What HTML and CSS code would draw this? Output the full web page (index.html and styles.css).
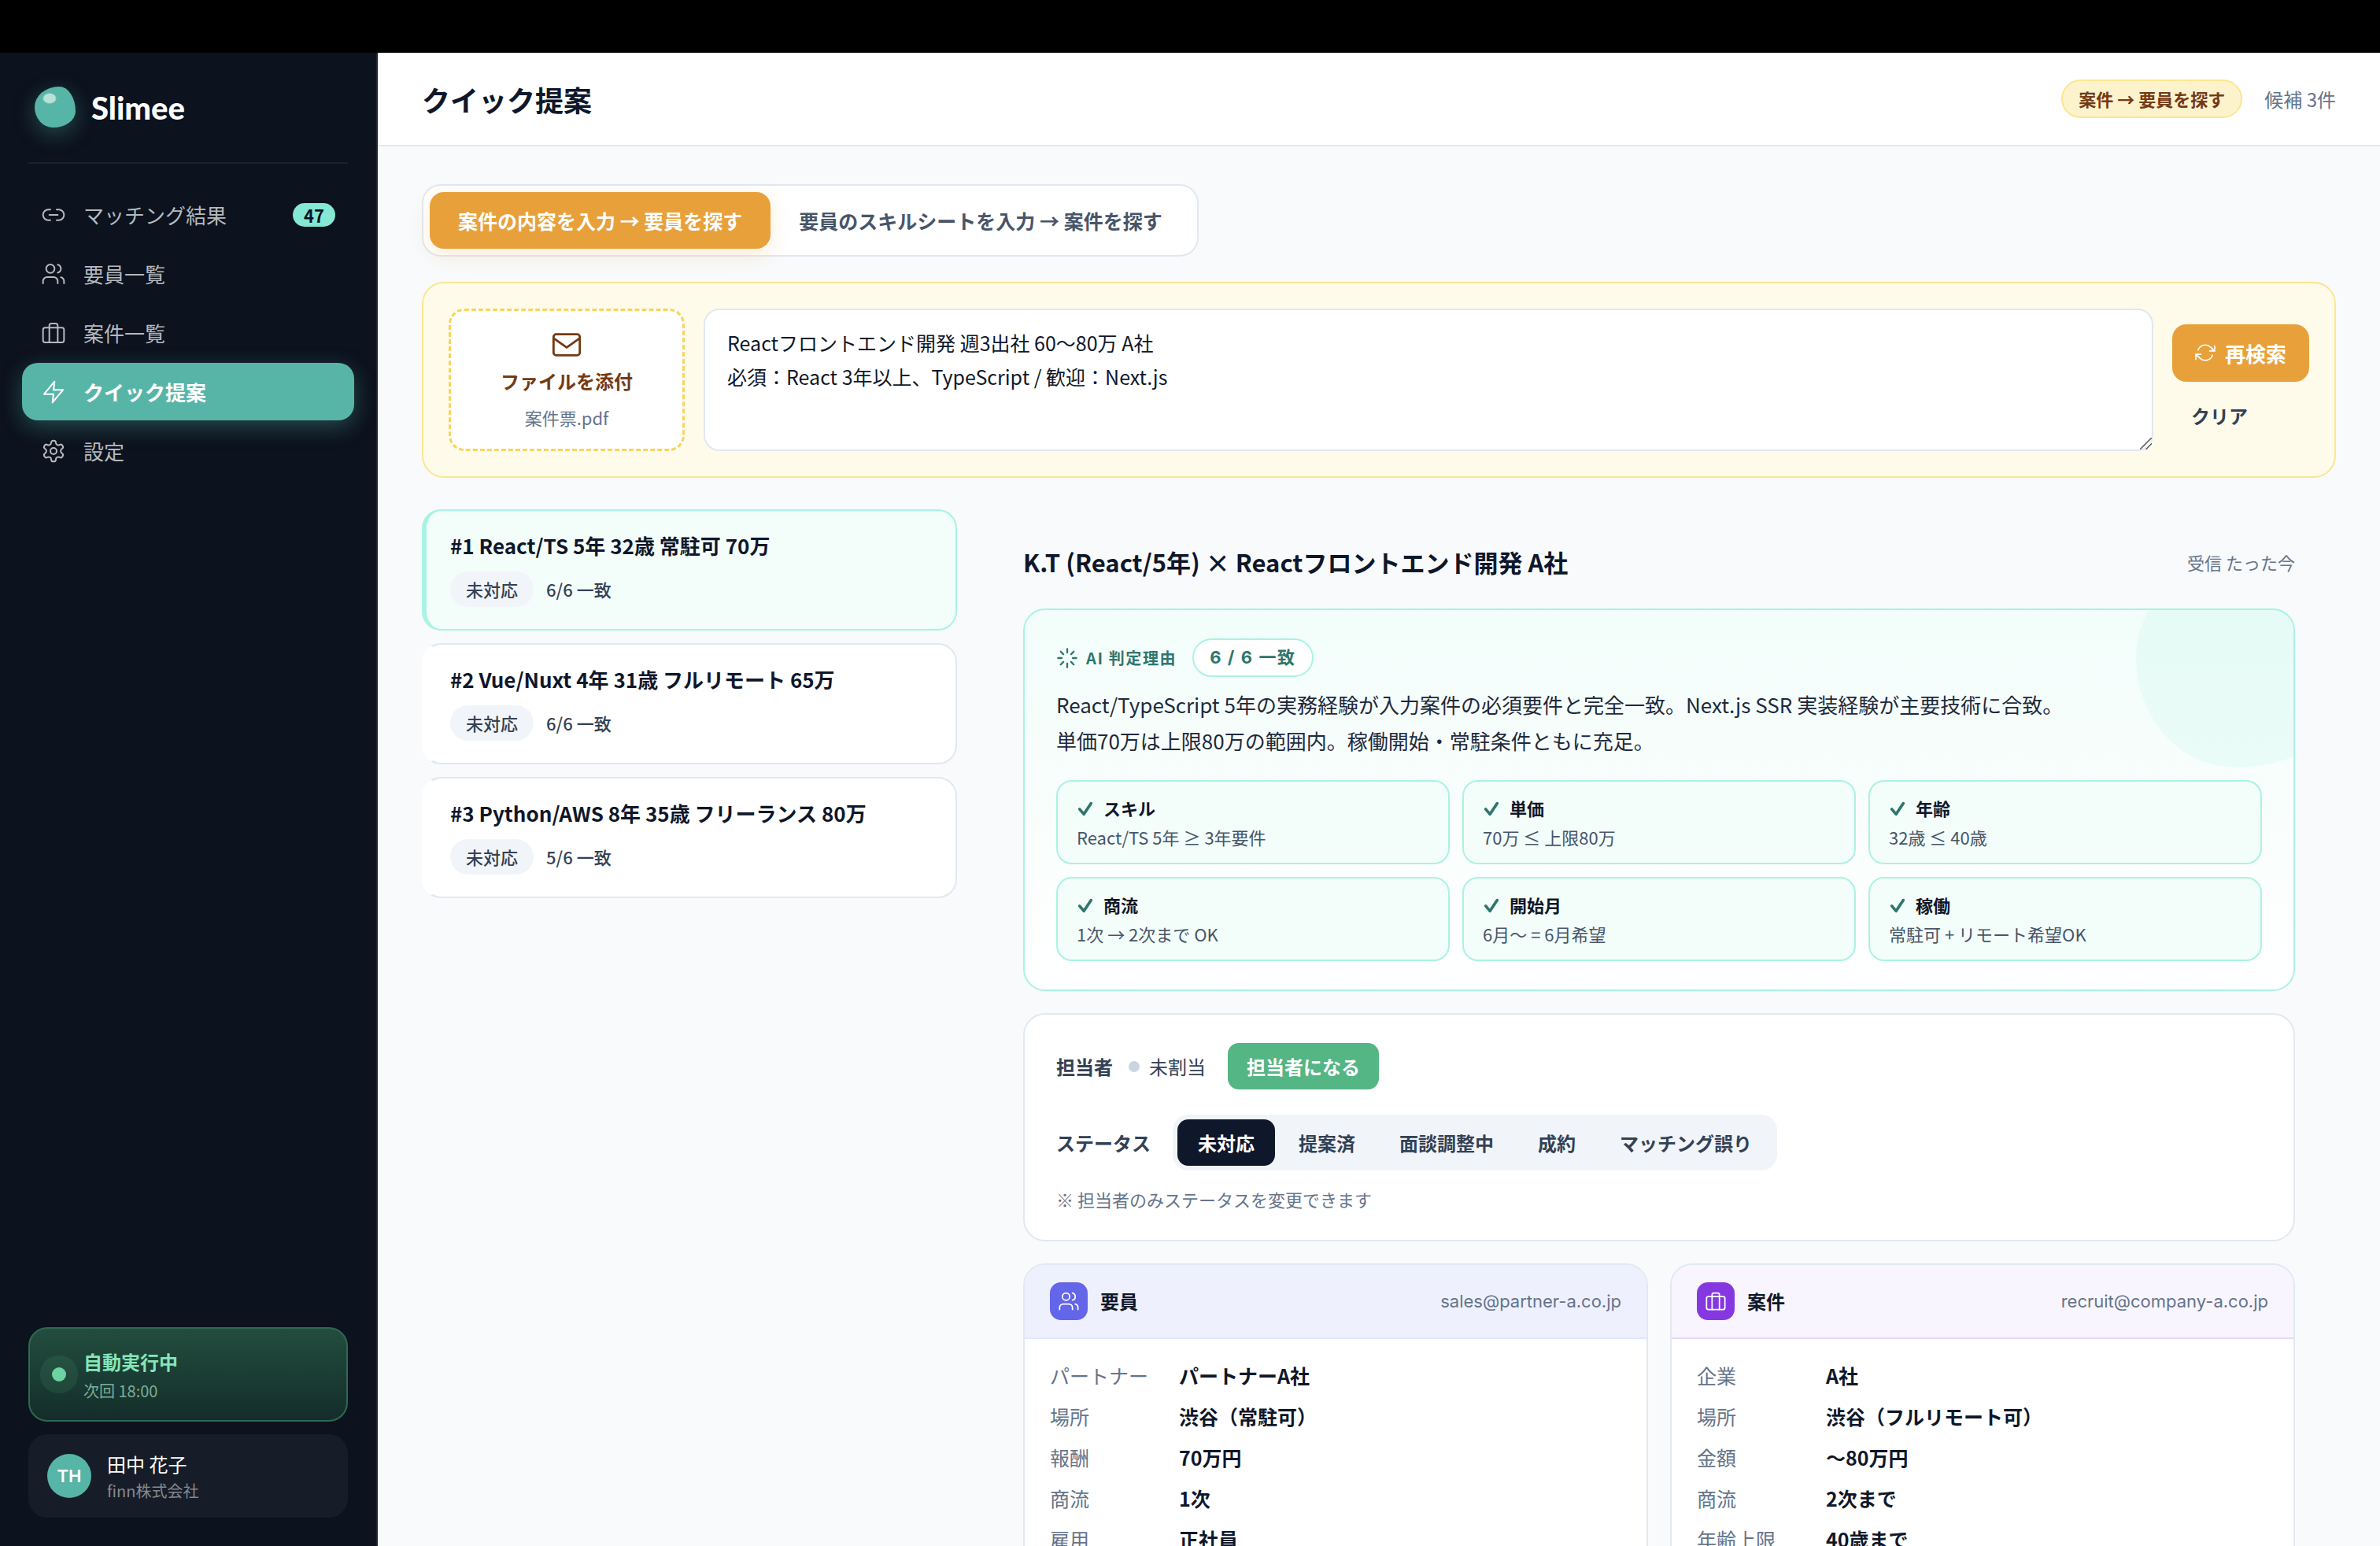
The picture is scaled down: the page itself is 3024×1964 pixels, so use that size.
FILE: index.html
```html
<!DOCTYPE html>
<html lang="ja">
<head>
<meta charset="utf-8">
<meta name="viewport" content="width=device-width, initial-scale=1">
<title>Slimee - クイック提案</title>
<link rel="stylesheet" href="styles.css">
</head>
<body>
<svg class="sprite" aria-hidden="true">
  <symbol id="i-link" viewBox="0 0 24 24"><path d="M9 17H7A5 5 0 0 1 7 7h2M15 7h2a5 5 0 1 1 0 10h-2M8 12h8"/></symbol>
  <symbol id="i-users" viewBox="0 0 24 24"><path d="M16 21v-2a4 4 0 0 0-4-4H6a4 4 0 0 0-4 4v2"/><circle cx="9" cy="7" r="4"/><path d="M22 21v-2a4 4 0 0 0-3-3.87M16 3.13a4 4 0 0 1 0 7.75"/></symbol>
  <symbol id="i-case" viewBox="0 0 24 24"><rect x="2" y="7" width="20" height="14" rx="2"/><path d="M16 21V5a2 2 0 0 0-2-2h-4a2 2 0 0 0-2 2v16"/></symbol>
  <symbol id="i-bolt" viewBox="0 0 24 24"><path d="M13 2 3 14h9l-1 8 10-12h-9l1-8z"/></symbol>
  <symbol id="i-gear" viewBox="0 0 24 24"><path d="M12.22 2h-.44a2 2 0 0 0-2 2v.18a2 2 0 0 1-1 1.73l-.43.25a2 2 0 0 1-2 0l-.15-.08a2 2 0 0 0-2.73.73l-.22.38a2 2 0 0 0 .73 2.73l.15.1a2 2 0 0 1 1 1.72v.51a2 2 0 0 1-1 1.74l-.15.09a2 2 0 0 0-.73 2.73l.22.38a2 2 0 0 0 2.73.73l.15-.08a2 2 0 0 1 2 0l.43.25a2 2 0 0 1 1 1.73V20a2 2 0 0 0 2 2h.44a2 2 0 0 0 2-2v-.18a2 2 0 0 1 1-1.73l.43-.25a2 2 0 0 1 2 0l.15.08a2 2 0 0 0 2.73-.73l.22-.39a2 2 0 0 0-.73-2.73l-.15-.08a2 2 0 0 1-1-1.74v-.5a2 2 0 0 1 1-1.74l.15-.09a2 2 0 0 0 .73-2.73l-.22-.38a2 2 0 0 0-2.73-.73l-.15.08a2 2 0 0 1-2 0l-.43-.25a2 2 0 0 1-1-1.73V4a2 2 0 0 0-2-2z"/><circle cx="12" cy="12" r="3"/></symbol>
  <symbol id="i-mail" viewBox="0 0 24 24"><rect x="2" y="4" width="20" height="16" rx="2"/><path d="m22 7-10 7L2 7"/></symbol>
  <symbol id="i-refresh" viewBox="0 0 24 24"><path d="M23 4v6h-6M1 20v-6h6"/><path d="M3.51 9a9 9 0 0 1 14.85-3.36L23 10M1 14l4.64 4.36A9 9 0 0 0 20.49 15"/></symbol>
  <symbol id="i-spark" viewBox="0 0 24 24"><path d="M12 2v4M12 18v4M4.93 4.93l2.83 2.83M16.24 16.24l2.83 2.83M2 12h4M18 12h4M4.93 19.07l2.83-2.83M16.24 7.76l2.83-2.83"/></symbol>
  <symbol id="i-check" viewBox="0 0 24 24"><path d="m4 13 6 7L20 5"/></symbol>
</svg>

<div class="topbar"></div>
<div class="app">
  <aside class="sidebar">
    <div class="brand"><span class="blob"></span><span class="brand-name">Slimee</span></div>
    <nav class="nav">
      <a class="nav-item" href="#"><svg class="icon"><use href="#i-link"/></svg>マッチング結果<span class="count">47</span></a>
      <a class="nav-item" href="#"><svg class="icon"><use href="#i-users"/></svg>要員一覧</a>
      <a class="nav-item" href="#"><svg class="icon"><use href="#i-case"/></svg>案件一覧</a>
      <a class="nav-item active" href="#" aria-current="page"><svg class="icon"><use href="#i-bolt"/></svg>クイック提案</a>
      <a class="nav-item" href="#"><svg class="icon"><use href="#i-gear"/></svg>設定</a>
    </nav>
    <div class="sidebar-foot">
      <div class="run-card">
        <span class="pulse"></span>
        <div class="foot-text"><p class="run-title">自動実行中</p><p class="run-next">次回 18:00</p></div>
      </div>
      <div class="user-card">
        <span class="avatar">TH</span>
        <div class="foot-text"><p class="user-name">田中 花子</p><p class="user-org">finn株式会社</p></div>
      </div>
    </div>
  </aside>

  <div class="page">
    <header class="page-head">
      <h1>クイック提案</h1>
      <span class="mode-pill">案件 → 要員を探す</span>
      <span class="hits">候補 3件</span>
    </header>
    <main class="content">
      <div class="tabs">
        <button class="tab selected" type="button">案件の内容を入力 → 要員を探す</button>
        <button class="tab" type="button">要員のスキルシートを入力 → 案件を探す</button>
      </div>

      <form class="search">
        <button class="attach" type="button">
          <svg class="icon icon-mail"><use href="#i-mail"/></svg>
          <span class="attach-title">ファイルを添付</span>
          <span class="attach-file">案件票.pdf</span>
        </button>
        <textarea class="query" aria-label="案件の内容">Reactフロントエンド開発 週3出社 60〜80万 A社
必須：React 3年以上、TypeScript / 歓迎：Next.js</textarea>
        <div class="search-actions">
          <button class="again" type="button"><svg class="icon icon-refresh"><use href="#i-refresh"/></svg>再検索</button>
          <button class="clear" type="button">クリア</button>
        </div>
      </form>

      <div class="split">
        <section class="results" aria-label="候補">
          <article class="result current"><h3>#1 React/TS 5年 32歳 常駐可 70万</h3><p class="result-meta"><span class="state">未対応</span><span>6/6 一致</span></p></article>
          <article class="result"><h3>#2 Vue/Nuxt 4年 31歳 フルリモート 65万</h3><p class="result-meta"><span class="state">未対応</span><span>6/6 一致</span></p></article>
          <article class="result"><h3>#3 Python/AWS 8年 35歳 フリーランス 80万</h3><p class="result-meta"><span class="state">未対応</span><span>5/6 一致</span></p></article>
        </section>

        <section class="detail">
          <div class="detail-head">
            <h2>K.T (React/5年) × Reactフロントエンド開発 A社</h2>
            <span class="received">受信 たった今</span>
          </div>

          <div class="card reason">
            <div class="reason-head">
              <svg class="icon icon-spark"><use href="#i-spark"/></svg>
              <span>AI 判定理由</span>
              <span class="score">6 / 6 一致</span>
            </div>
            <p class="reason-text">React/TypeScript 5年の実務経験が入力案件の必須要件と完全一致。Next.js SSR 実装経験が主要技術に合致。<br>単価70万は上限80万の範囲内。稼働開始・常駐条件ともに充足。</p>
            <ul class="checks">
              <li><strong><svg class="icon icon-check"><use href="#i-check"/></svg>スキル</strong><span>React/TS 5年 ≥ 3年要件</span></li>
              <li><strong><svg class="icon icon-check"><use href="#i-check"/></svg>単価</strong><span>70万 ≤ 上限80万</span></li>
              <li><strong><svg class="icon icon-check"><use href="#i-check"/></svg>年齢</strong><span>32歳 ≤ 40歳</span></li>
              <li><strong><svg class="icon icon-check"><use href="#i-check"/></svg>商流</strong><span>1次 → 2次まで OK</span></li>
              <li><strong><svg class="icon icon-check"><use href="#i-check"/></svg>開始月</strong><span>6月〜 = 6月希望</span></li>
              <li><strong><svg class="icon icon-check"><use href="#i-check"/></svg>稼働</strong><span>常駐可 + リモート希望OK</span></li>
            </ul>
          </div>

          <div class="card manage">
            <div class="manage-row">
              <span class="field">担当者</span>
              <span class="owner">未割当</span>
              <button class="take" type="button">担当者になる</button>
            </div>
            <div class="manage-row status-row">
              <span class="field">ステータス</span>
              <div class="segments">
                <button class="segment on" type="button">未対応</button>
                <button class="segment" type="button">提案済</button>
                <button class="segment" type="button">面談調整中</button>
                <button class="segment" type="button">成約</button>
                <button class="segment" type="button">マッチング誤り</button>
              </div>
            </div>
            <p class="note">※ 担当者のみステータスを変更できます</p>
          </div>

          <div class="pair">
            <section class="card party">
              <header class="party-head staff"><span class="tile"><svg class="icon"><use href="#i-users"/></svg></span><h3>要員</h3><a class="mail" href="mailto:sales@partner-a.co.jp">sales@partner-a.co.jp</a></header>
              <dl class="facts">
                <dt>パートナー</dt><dd>パートナーA社</dd>
                <dt>場所</dt><dd>渋谷（常駐可）</dd>
                <dt>報酬</dt><dd>70万円</dd>
                <dt>商流</dt><dd>1次</dd>
                <dt>雇用</dt><dd>正社員</dd>
              </dl>
            </section>
            <section class="card party">
              <header class="party-head project"><span class="tile"><svg class="icon"><use href="#i-case"/></svg></span><h3>案件</h3><a class="mail" href="mailto:recruit@company-a.co.jp">recruit@company-a.co.jp</a></header>
              <dl class="facts">
                <dt>企業</dt><dd>A社</dd>
                <dt>場所</dt><dd>渋谷（フルリモート可）</dd>
                <dt>金額</dt><dd>〜80万円</dd>
                <dt>商流</dt><dd>2次まで</dd>
                <dt>年齢上限</dt><dd>40歳まで</dd>
              </dl>
            </section>
          </div>
        </section>
      </div>
    </main>
  </div>
</div>
</body>
</html>
```
FILE: styles.css
```css
:root {
  --ink: #0f172a;
  --ink-2: #334155;
  --ink-3: #475569;
  --muted: #64748b;
  --line: #e2e8f0;
  --soft: #f1f5f9;
  --teal: #57b5a7;
  --teal-ink: #2f766d;
  --mint: #84e8d4;
  --mint-line: #aaf3e2;
  --mint-bg: #f3fdfa;
  --amber: #e8a13a;
  --amber-ink: #743a15;
  --amber-line: #fbe690;
  --blob: 60% 40% 55% 45% / 50% 60% 40% 50%;
  --latin: Inter, "Noto Sans CJK JP", sans-serif;
}

*, *::before, *::after { box-sizing: border-box; }

body {
  margin: 0;
  height: 100vh;
  display: flex;
  flex-direction: column;
  overflow: hidden;
  background: #f8fafc;
  color: var(--ink);
  font-family: "Noto Sans CJK JP", sans-serif;
  font-size: 26px;
}

h1, h2, h3, p, ul, dl, dd { margin: 0; padding: 0; }
ul { list-style: none; }
a { color: inherit; text-decoration: none; }
button, textarea { font: inherit; color: inherit; border: 0; margin: 0; background: none; }
button { padding: 0; cursor: pointer; }

.sprite { display: none; }
.icon {
  width: 32px;
  height: 32px;
  flex: none;
  fill: none;
  stroke: currentColor;
  stroke-width: 1.5;
  stroke-linecap: round;
  stroke-linejoin: round;
}

.topbar { flex: none; height: 67px; background: #000; }
.app { flex: 1; min-height: 0; display: flex; }

/* Sidebar */
.sidebar {
  flex: none;
  width: 480px;
  display: flex;
  flex-direction: column;
  padding: 36px 28px;
  border-right: 2px solid #20262f;
  background: #0c121e;
  color: #b6b9bd;
}
.brand {
  display: flex;
  align-items: center;
  gap: 20px;
  margin: 0 8px;
  padding: 7px 8px 44px;
  border-bottom: 2px solid #1a202c;
}
.blob {
  width: 52px;
  height: 52px;
  border-radius: var(--blob);
  background: radial-gradient(9px 7px at 19px 15px, #b8e1d8 80%, transparent), var(--teal);
  box-shadow: 0 8px 28px rgba(87, 181, 167, .35);
}
.brand-name { padding-top: 2px; font: 900 40px/50px Lato, sans-serif; color: #fff; }
.nav { display: grid; gap: 2px; margin-top: 28px; }
.nav-item {
  display: flex;
  align-items: center;
  height: 73px;
  padding: 0 24px;
  gap: 22px;
  border-radius: 20px;
}
.nav-item.active {
  background: var(--teal);
  color: #fff;
  font-weight: 700;
  box-shadow: 0 8px 28px rgba(87, 181, 167, .35);
}
.count {
  margin-left: auto;
  padding: 0 14px;
  border-radius: 16px;
  background: var(--mint);
  color: #0c121e;
  font-size: 22px;
  line-height: 30px;
  font-weight: 700;
}
.sidebar-foot { display: grid; gap: 16px; margin: auto 8px 0; }
.run-card, .user-card { display: flex; align-items: center; border-radius: 24px; }
.run-card {
  gap: 22px;
  height: 120px;
  padding: 0 28px;
  border: 2px solid #306850;
  background: linear-gradient(#224d3e, #142d2a);
}
.foot-text { padding-top: 4px; }
.pulse {
  width: 18px;
  height: 18px;
  border-radius: 50%;
  background: #6dd3a0;
  box-shadow: 0 0 0 15px rgba(109, 211, 160, .1);
}
.run-title { font-size: 24px; line-height: 36px; font-weight: 700; color: #86e5b8; }
.run-next { margin-top: 2px; font-size: 20px; line-height: 34px; color: #7cae98; }
.user-card { gap: 20px; height: 106px; padding: 0 24px; background: #161c28; }
.avatar {
  width: 56px;
  border-radius: 50%;
  background: var(--teal);
  color: #fff;
  text-align: center;
  font: 600 22px/56px var(--latin);
}
.user-name { font-size: 24px; line-height: 34px; color: #fff; }
.user-org { font-size: 20px; line-height: 34px; color: #85898f; }

/* Page header */
.page { flex: 1; min-width: 0; display: flex; flex-direction: column; }
.page-head {
  flex: none;
  display: flex;
  align-items: center;
  gap: 28px;
  height: 119px;
  padding: 0 56px;
  border-bottom: 2px solid var(--line);
  background: #fff;
}
.page-head h1 { margin-right: auto; font-size: 36px; line-height: 52px; }
.mode-pill {
  padding: 0 20px;
  border: 2px solid var(--amber-line);
  border-radius: 25px;
  background: #fcf3cd;
  color: var(--amber-ink);
  font-size: 22px;
  line-height: 45px;
  font-weight: 700;
}
.hits { font-size: 24px; color: var(--muted); }

.content { flex: 1; min-height: 0; padding: 48px 56px 0; overflow: hidden; }

/* Direction tabs */
.tabs {
  display: flex;
  width: fit-content;
  padding: 8px;
  border: 2px solid var(--line);
  border-radius: 24px;
  background: #fff;
}
.tab {
  padding: 0 36px;
  border-radius: 18px;
  color: var(--ink-3);
  font-size: 25px;
  line-height: 72px;
  font-weight: 700;
}
.tab.selected { background: var(--amber); color: #fff; box-shadow: 0 8px 28px rgba(232, 161, 58, .2); }

/* Search panel */
.search {
  display: flex;
  gap: 24px;
  margin-top: 32px;
  padding: 32px;
  border: 2px solid var(--amber-line);
  border-radius: 28px;
  background: #fffbeb;
}
.attach {
  flex: none;
  width: 300px;
  display: flex;
  flex-direction: column;
  align-items: center;
  justify-content: center;
  border: 3px dashed #f8d45c;
  border-radius: 20px;
  background: #fff;
}
.icon-mail { width: 40px; height: 40px; color: var(--amber-ink); stroke-width: 1.7; }
.attach-title { margin-top: 8px; font-size: 24px; line-height: 36px; font-weight: 700; color: var(--amber-ink); }
.attach-file { margin-top: 10px; font-size: 22px; line-height: 36px; color: var(--muted); }
.query {
  flex: 1;
  min-width: 0;
  height: 181px;
  padding: 20px 28px;
  border: 2px solid var(--line);
  border-radius: 20px;
  background: #fff;
  font-size: 25px;
  line-height: 43px;
  resize: vertical;
}
.query::-webkit-resizer {
  background: linear-gradient(135deg, transparent 46%, #666 47% 53%, transparent 54% 72%, #666 73% 79%, transparent 80%);
}
.search-actions { display: flex; flex-direction: column; align-items: flex-start; justify-content: center; gap: 16px; }
.again {
  display: flex;
  align-items: center;
  gap: 12px;
  height: 73px;
  padding: 0 29px;
  border-radius: 18px;
  background: var(--amber);
  color: #fff;
  font-weight: 700;
}
.icon-refresh { width: 26px; height: 26px; }
.clear { padding: 0 24px; font-size: 24px; line-height: 53px; font-weight: 700; color: var(--ink-2); }

/* Result list */
.split { display: grid; grid-template-columns: 680px 1fr; gap: 32px; margin-top: 40px; }
.results { display: grid; gap: 16px; align-content: start; }
.result {
  padding: 24px 30px 28px;
  border: 2px solid var(--line);
  border-left: 6px solid transparent;
  border-radius: 24px;
  background: #fff;
}
.result.current { border-color: var(--mint-line); background: var(--mint-bg); }
.result h3 { font-size: 26px; line-height: 39px; }
.result-meta {
  display: flex;
  align-items: center;
  gap: 16px;
  margin-top: 14px;
  font-size: 22px;
  line-height: 45px;
  font-weight: 500;
  color: var(--ink-2);
}
.state { padding: 0 20px; border-radius: 23px; background: var(--soft); }

/* Detail */
.detail { min-width: 0; padding: 40px 52px 56px; }
.detail-head { display: flex; align-items: center; justify-content: space-between; height: 54px; margin-bottom: 32px; }
.detail-head h2 { font-size: 31px; line-height: 48px; }
.received { font-size: 22px; color: var(--muted); }
.card { border: 2px solid var(--line); border-radius: 28px; background: #fff; overflow: hidden; }

.reason {
  position: relative;
  padding: 36px 40px;
  border-color: var(--mint-line);
  background: linear-gradient(#f2fdfa, #fff);
}
.reason::before {
  content: "";
  position: absolute;
  top: -80px;
  right: -80px;
  width: 280px;
  height: 280px;
  border-radius: var(--blob);
  background: rgba(132, 232, 212, .1);
}
.reason-head {
  display: flex;
  align-items: center;
  font-size: 20px;
  font-weight: 700;
  letter-spacing: .08em;
  color: var(--teal-ink);
}
.icon-spark { width: 28px; height: 28px; margin-right: 10px; stroke-width: 2; }
.score {
  margin-left: 20px;
  padding: 0 20px;
  border: 2px solid var(--mint-line);
  border-radius: 25px;
  background: #fff;
  font-family: var(--latin);
  font-size: 22px;
  line-height: 45px;
}
.reason-text { margin-top: 12px; font-size: 26px; line-height: 46px; color: #1e293b; }
.checks { display: grid; grid-template-columns: repeat(3, 1fr); gap: 16px; margin-top: 27px; }
.checks li {
  display: grid;
  gap: 2px;
  padding: 16px 24px;
  border: 2px solid var(--mint-line);
  border-radius: 20px;
  background: var(--mint-bg);
  font-size: 22px;
}
.checks strong { display: flex; align-items: center; gap: 12px; line-height: 35px; }
.checks span { line-height: 34px; color: var(--ink-3); }
.icon-check { width: 22px; height: 22px; color: var(--teal-ink); stroke-width: 4; }

.manage { margin-top: 28px; padding: 36px 40px; font-size: 24px; line-height: 59px; }
.manage-row { display: flex; align-items: center; color: var(--ink-2); }
.status-row { margin-top: 32px; }
.field { font-weight: 700; }
.owner { display: flex; align-items: center; gap: 12px; margin: 0 28px 0 20px; }
.owner::before { content: ""; width: 14px; height: 14px; border-radius: 50%; background: #cbd5e1; }
.take { padding: 0 24px; border-radius: 14px; background: #54b585; color: #fff; font-weight: 700; }
.segments { display: flex; gap: 4px; margin-left: 28px; padding: 6px; border-radius: 20px; background: var(--soft); }
.segment { padding: 0 26px; border-radius: 14px; font-weight: 700; }
.segment.on { background: var(--ink); color: #fff; }
.note { margin-top: 20px; font-size: 22px; line-height: 32px; color: var(--muted); }

.pair { display: grid; grid-template-columns: 1fr 1fr; gap: 28px; margin-top: 28px; }
.party-head { display: flex; align-items: center; gap: 16px; padding: 22px 32px; border-bottom: 2px solid; }
.party-head h3 { font-size: 24px; line-height: 36px; }
.staff { background: #eef0fe; border-color: #e0e7ff; }
.project { background: #f8f5fe; border-color: #e9d8fd; }
.tile { display: grid; place-items: center; width: 48px; height: 48px; border-radius: 14px; background: #6366e8; color: #fff; }
.project .tile { background: #8638e0; }
.tile .icon { width: 28px; height: 28px; }
.mail { margin-left: auto; font-family: var(--latin); font-size: 22px; color: var(--muted); }
.facts {
  display: grid;
  grid-template-columns: 140px 1fr;
  gap: 8px 24px;
  padding: 24px 32px;
  font-size: 25px;
  line-height: 44px;
}
.facts dt { color: var(--muted); }
.facts dd { font-weight: 700; }
```
